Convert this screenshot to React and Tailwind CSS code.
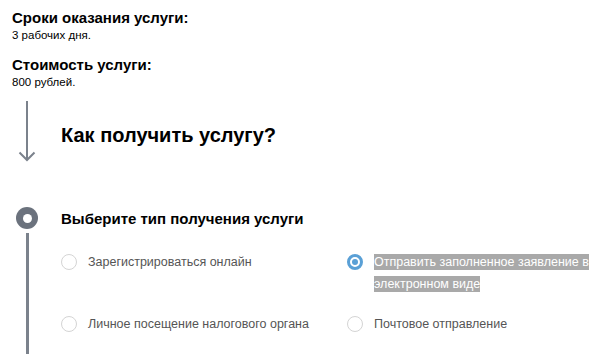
import React from "react";

function Radio({ checked }) {
  if (checked) {
    return (
      <span className="mt-[3px] flex h-[16px] w-[16px] shrink-0 items-center justify-center rounded-full border-[3px] border-[#5aa0d6] bg-white">
        <span className="h-[6px] w-[6px] rounded-full bg-[#5aa0d6]" />
      </span>
    );
  }
  return <span className="mt-[3px] h-[16px] w-[16px] shrink-0 rounded-full border border-[#d4d4d4] bg-white" />;
}

function Option({ checked, children }) {
  return (
    <div className="flex items-start gap-[11px]">
      <Radio checked={checked} />
      <div className="text-[12.5px] leading-[22px] text-[#555]">{children}</div>
    </div>
  );
}

export default function App() {
  return (
    <div className="h-[354px] w-[600px] overflow-hidden bg-white pl-[12px] pt-[9px] text-black" style={{ fontFamily: '"Liberation Sans", Arial, sans-serif' }}>
      <div className="text-[15px] font-bold leading-[17px]">Сроки оказания услуги:</div>
      <div className="mt-[2px] text-[11.5px] leading-[14px]">3 рабочих дня.</div>
      <div className="mt-[14px] text-[15px] font-bold leading-[17px]">Стоимость услуги:</div>
      <div className="mt-[2px] text-[11.5px] leading-[14px]">800 рублей.</div>

      <div className="mt-[12px] flex">
        <div className="flex w-[30px] shrink-0 justify-center">
          <svg width="20" height="62" viewBox="0 0 20 62" className="block">
            <line x1="10" y1="0" x2="10" y2="59" stroke="#7b828c" strokeWidth="2" />
            <polyline points="2.5,51.5 10,59 17.5,51.5" fill="none" stroke="#7b828c" strokeWidth="2" />
          </svg>
        </div>
        <div className="ml-[19px] pt-[22px] text-[20px] font-bold leading-[24px]">Как получить услугу?</div>
      </div>

      <div className="mt-[44px] flex">
        <div className="flex w-[30px] shrink-0 flex-col items-center">
          <div className="flex h-[22px] w-[22px] items-center justify-center rounded-full bg-[#6b727d]">
            <div className="h-[9px] w-[9px] rounded-full bg-white" />
          </div>
          <div className="mt-[4px] h-[200px] w-[3px] bg-[#7b828c]" />
        </div>
        <div className="ml-[19px] flex-1">
          <div className="pt-[3px] text-[15px] font-bold leading-[18px]">Выберите тип получения услуги</div>
          <div className="mt-[23px] grid grid-cols-[286px_1fr] gap-y-[18px]">
            <Option>Зарегистрироваться онлайн</Option>
            <Option checked>
              <div className="max-w-[226px]">
                <span className="bg-[#a9a9a9] py-[1px] text-white [box-decoration-break:clone]">
                  Отправить заполненное заявление в электронном виде
                </span>
              </div>
            </Option>
            <Option>Личное посещение налогового органа</Option>
            <Option>Почтовое отправление</Option>
          </div>
        </div>
      </div>
    </div>
  );
}
